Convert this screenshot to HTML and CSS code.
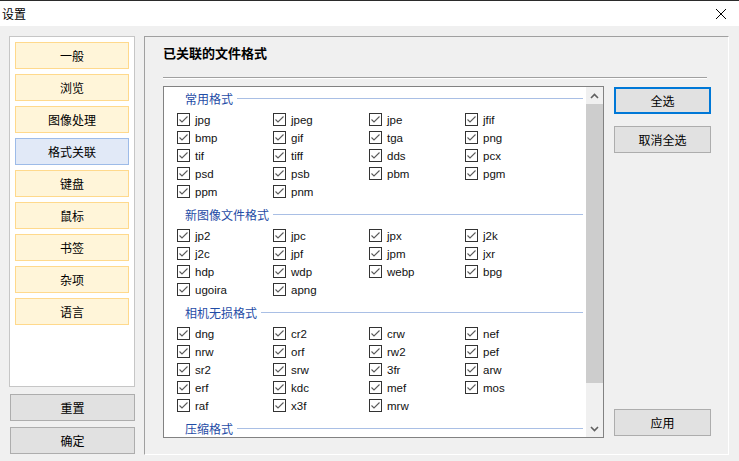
FILE: index.html
```html
<!DOCTYPE html>
<html lang="zh-CN">
<head>
<meta charset="utf-8">
<title>设置</title>
<link rel="stylesheet" href="styles.css">
</head>
<body>
<div class="titlebar">
  <span class="title">设置</span>
  <svg class="close" width="12" height="12" viewBox="0 0 12 12"><path d="M1 1 L11 11 M11 1 L1 11" stroke="#000" stroke-width="1" fill="none"/></svg>
</div>
<div class="main">
  <div class="side">
    <div class="nav">
      <div class="nav-btn">一般</div>
      <div class="nav-btn">浏览</div>
      <div class="nav-btn">图像处理</div>
      <div class="nav-btn active">格式关联</div>
      <div class="nav-btn">键盘</div>
      <div class="nav-btn">鼠标</div>
      <div class="nav-btn">书签</div>
      <div class="nav-btn">杂项</div>
      <div class="nav-btn">语言</div>
    </div>
    <div class="btn side-btn first">重置</div>
    <div class="btn side-btn">确定</div>
  </div>
  <div class="panel">
    <div class="header">已关联的文件格式</div>
    <div class="sep"></div>
    <div class="row">
      <div class="list">
        <div class="content">
          <div class="group-label"><span>常用格式</span><i class="gline"></i></div>
          <div class="grid">
            <label class="item"><span class="cb"><svg viewBox="0 0 11 11"><path d="M1.5 5.5 L4 8 L9.5 2.5"/></svg></span>jpg</label>
            <label class="item"><span class="cb"><svg viewBox="0 0 11 11"><path d="M1.5 5.5 L4 8 L9.5 2.5"/></svg></span>jpeg</label>
            <label class="item"><span class="cb"><svg viewBox="0 0 11 11"><path d="M1.5 5.5 L4 8 L9.5 2.5"/></svg></span>jpe</label>
            <label class="item"><span class="cb"><svg viewBox="0 0 11 11"><path d="M1.5 5.5 L4 8 L9.5 2.5"/></svg></span>jfif</label>
            <label class="item"><span class="cb"><svg viewBox="0 0 11 11"><path d="M1.5 5.5 L4 8 L9.5 2.5"/></svg></span>bmp</label>
            <label class="item"><span class="cb"><svg viewBox="0 0 11 11"><path d="M1.5 5.5 L4 8 L9.5 2.5"/></svg></span>gif</label>
            <label class="item"><span class="cb"><svg viewBox="0 0 11 11"><path d="M1.5 5.5 L4 8 L9.5 2.5"/></svg></span>tga</label>
            <label class="item"><span class="cb"><svg viewBox="0 0 11 11"><path d="M1.5 5.5 L4 8 L9.5 2.5"/></svg></span>png</label>
            <label class="item"><span class="cb"><svg viewBox="0 0 11 11"><path d="M1.5 5.5 L4 8 L9.5 2.5"/></svg></span>tif</label>
            <label class="item"><span class="cb"><svg viewBox="0 0 11 11"><path d="M1.5 5.5 L4 8 L9.5 2.5"/></svg></span>tiff</label>
            <label class="item"><span class="cb"><svg viewBox="0 0 11 11"><path d="M1.5 5.5 L4 8 L9.5 2.5"/></svg></span>dds</label>
            <label class="item"><span class="cb"><svg viewBox="0 0 11 11"><path d="M1.5 5.5 L4 8 L9.5 2.5"/></svg></span>pcx</label>
            <label class="item"><span class="cb"><svg viewBox="0 0 11 11"><path d="M1.5 5.5 L4 8 L9.5 2.5"/></svg></span>psd</label>
            <label class="item"><span class="cb"><svg viewBox="0 0 11 11"><path d="M1.5 5.5 L4 8 L9.5 2.5"/></svg></span>psb</label>
            <label class="item"><span class="cb"><svg viewBox="0 0 11 11"><path d="M1.5 5.5 L4 8 L9.5 2.5"/></svg></span>pbm</label>
            <label class="item"><span class="cb"><svg viewBox="0 0 11 11"><path d="M1.5 5.5 L4 8 L9.5 2.5"/></svg></span>pgm</label>
            <label class="item"><span class="cb"><svg viewBox="0 0 11 11"><path d="M1.5 5.5 L4 8 L9.5 2.5"/></svg></span>ppm</label>
            <label class="item"><span class="cb"><svg viewBox="0 0 11 11"><path d="M1.5 5.5 L4 8 L9.5 2.5"/></svg></span>pnm</label>
          </div>
          <div class="group-label"><span>新图像文件格式</span><i class="gline"></i></div>
          <div class="grid">
            <label class="item"><span class="cb"><svg viewBox="0 0 11 11"><path d="M1.5 5.5 L4 8 L9.5 2.5"/></svg></span>jp2</label>
            <label class="item"><span class="cb"><svg viewBox="0 0 11 11"><path d="M1.5 5.5 L4 8 L9.5 2.5"/></svg></span>jpc</label>
            <label class="item"><span class="cb"><svg viewBox="0 0 11 11"><path d="M1.5 5.5 L4 8 L9.5 2.5"/></svg></span>jpx</label>
            <label class="item"><span class="cb"><svg viewBox="0 0 11 11"><path d="M1.5 5.5 L4 8 L9.5 2.5"/></svg></span>j2k</label>
            <label class="item"><span class="cb"><svg viewBox="0 0 11 11"><path d="M1.5 5.5 L4 8 L9.5 2.5"/></svg></span>j2c</label>
            <label class="item"><span class="cb"><svg viewBox="0 0 11 11"><path d="M1.5 5.5 L4 8 L9.5 2.5"/></svg></span>jpf</label>
            <label class="item"><span class="cb"><svg viewBox="0 0 11 11"><path d="M1.5 5.5 L4 8 L9.5 2.5"/></svg></span>jpm</label>
            <label class="item"><span class="cb"><svg viewBox="0 0 11 11"><path d="M1.5 5.5 L4 8 L9.5 2.5"/></svg></span>jxr</label>
            <label class="item"><span class="cb"><svg viewBox="0 0 11 11"><path d="M1.5 5.5 L4 8 L9.5 2.5"/></svg></span>hdp</label>
            <label class="item"><span class="cb"><svg viewBox="0 0 11 11"><path d="M1.5 5.5 L4 8 L9.5 2.5"/></svg></span>wdp</label>
            <label class="item"><span class="cb"><svg viewBox="0 0 11 11"><path d="M1.5 5.5 L4 8 L9.5 2.5"/></svg></span>webp</label>
            <label class="item"><span class="cb"><svg viewBox="0 0 11 11"><path d="M1.5 5.5 L4 8 L9.5 2.5"/></svg></span>bpg</label>
            <label class="item"><span class="cb"><svg viewBox="0 0 11 11"><path d="M1.5 5.5 L4 8 L9.5 2.5"/></svg></span>ugoira</label>
            <label class="item"><span class="cb"><svg viewBox="0 0 11 11"><path d="M1.5 5.5 L4 8 L9.5 2.5"/></svg></span>apng</label>
          </div>
          <div class="group-label"><span>相机无损格式</span><i class="gline"></i></div>
          <div class="grid">
            <label class="item"><span class="cb"><svg viewBox="0 0 11 11"><path d="M1.5 5.5 L4 8 L9.5 2.5"/></svg></span>dng</label>
            <label class="item"><span class="cb"><svg viewBox="0 0 11 11"><path d="M1.5 5.5 L4 8 L9.5 2.5"/></svg></span>cr2</label>
            <label class="item"><span class="cb"><svg viewBox="0 0 11 11"><path d="M1.5 5.5 L4 8 L9.5 2.5"/></svg></span>crw</label>
            <label class="item"><span class="cb"><svg viewBox="0 0 11 11"><path d="M1.5 5.5 L4 8 L9.5 2.5"/></svg></span>nef</label>
            <label class="item"><span class="cb"><svg viewBox="0 0 11 11"><path d="M1.5 5.5 L4 8 L9.5 2.5"/></svg></span>nrw</label>
            <label class="item"><span class="cb"><svg viewBox="0 0 11 11"><path d="M1.5 5.5 L4 8 L9.5 2.5"/></svg></span>orf</label>
            <label class="item"><span class="cb"><svg viewBox="0 0 11 11"><path d="M1.5 5.5 L4 8 L9.5 2.5"/></svg></span>rw2</label>
            <label class="item"><span class="cb"><svg viewBox="0 0 11 11"><path d="M1.5 5.5 L4 8 L9.5 2.5"/></svg></span>pef</label>
            <label class="item"><span class="cb"><svg viewBox="0 0 11 11"><path d="M1.5 5.5 L4 8 L9.5 2.5"/></svg></span>sr2</label>
            <label class="item"><span class="cb"><svg viewBox="0 0 11 11"><path d="M1.5 5.5 L4 8 L9.5 2.5"/></svg></span>srw</label>
            <label class="item"><span class="cb"><svg viewBox="0 0 11 11"><path d="M1.5 5.5 L4 8 L9.5 2.5"/></svg></span>3fr</label>
            <label class="item"><span class="cb"><svg viewBox="0 0 11 11"><path d="M1.5 5.5 L4 8 L9.5 2.5"/></svg></span>arw</label>
            <label class="item"><span class="cb"><svg viewBox="0 0 11 11"><path d="M1.5 5.5 L4 8 L9.5 2.5"/></svg></span>erf</label>
            <label class="item"><span class="cb"><svg viewBox="0 0 11 11"><path d="M1.5 5.5 L4 8 L9.5 2.5"/></svg></span>kdc</label>
            <label class="item"><span class="cb"><svg viewBox="0 0 11 11"><path d="M1.5 5.5 L4 8 L9.5 2.5"/></svg></span>mef</label>
            <label class="item"><span class="cb"><svg viewBox="0 0 11 11"><path d="M1.5 5.5 L4 8 L9.5 2.5"/></svg></span>mos</label>
            <label class="item"><span class="cb"><svg viewBox="0 0 11 11"><path d="M1.5 5.5 L4 8 L9.5 2.5"/></svg></span>raf</label>
            <label class="item"><span class="cb"><svg viewBox="0 0 11 11"><path d="M1.5 5.5 L4 8 L9.5 2.5"/></svg></span>x3f</label>
            <label class="item"><span class="cb"><svg viewBox="0 0 11 11"><path d="M1.5 5.5 L4 8 L9.5 2.5"/></svg></span>mrw</label>
          </div>
          <div class="group-label"><span>压缩格式</span><i class="gline"></i></div>
        </div>
        <div class="scrollbar">
          <div class="arrow"><svg width="9" height="6" viewBox="0 0 9 6"><path d="M1 5 L4.5 1.5 L8 5" stroke="#606060" stroke-width="1.6" fill="none"/></svg></div>
          <div class="thumb"></div>
          <div class="track"></div>
          <div class="arrow"><svg width="9" height="6" viewBox="0 0 9 6"><path d="M1 1 L4.5 4.5 L8 1" stroke="#606060" stroke-width="1.6" fill="none"/></svg></div>
        </div>
      </div>
      <div class="actions">
        <div class="btn focus">全选</div>
        <div class="btn second">取消全选</div>
        <div class="btn apply">应用</div>
      </div>
    </div>
  </div>
</div>
</body>
</html>
```
FILE: styles.css
```css
* { box-sizing: border-box; }
body {
  margin: 0;
  width: 739px;
  height: 461px;
  overflow: hidden;
  background: #f0f0f0;
  color: #000;
  font-family: "Liberation Sans", "Noto Sans CJK SC", sans-serif;
  font-size: 12px;
}
.titlebar {
  height: 26px;
  background: #fff;
  border-top: 1px solid #2b2b2b;
  display: flex;
  align-items: center;
  justify-content: space-between;
  padding: 0 12px 0 2px;
}
.title {
  font-family: "Noto Sans CJK SC", sans-serif;
  font-size: 12px;
}
.close { display: block; }
.main {
  display: flex;
  gap: 9px;
  padding: 10px 0 0 9px;
}
.side {
  width: 126px;
  display: flex;
  flex-direction: column;
}
.nav {
  height: 351px;
  background: #fff;
  border: 1px solid #c6c6c6;
  padding: 5px;
  display: flex;
  flex-direction: column;
  gap: 5px;
}
.nav-btn {
  height: 27px;
  border: 1px solid #ffd98c;
  background: #fff5d9;
  display: flex;
  align-items: center;
  justify-content: center;
  font-family: "Noto Sans CJK SC", sans-serif;
  font-size: 12px;
}
.nav-btn.active {
  background: #e1e9f7;
  border-color: #9dbbe8;
}
.btn {
  height: 27px;
  border: 1px solid #adadad;
  background: #e1e1e1;
  display: flex;
  align-items: center;
  justify-content: center;
  font-family: "Noto Sans CJK SC", sans-serif;
  font-size: 12px;
}
.side-btn {
  width: 125px;
  margin-left: 1px;
  margin-top: 6px;
}
.side-btn.first { margin-top: 7px; }
.panel {
  width: 585px;
  height: 419px;
  border-left: 1px solid #a0a0a0;
  border-top: 1px solid #a0a0a0;
  border-right: 1px solid #fff;
  border-bottom: 1px solid #fff;
  padding: 7px 0 0 18px;
}
.header {
  height: 18px;
  line-height: 18px;
  font-family: "Noto Sans CJK SC", sans-serif;
  font-size: 13px;
  font-weight: bold;
}
.sep {
  width: 544px;
  height: 2px;
  margin-top: 15px;
  border-top: 1px solid #a0a0a0;
  border-bottom: 1px solid #fff;
}
.row {
  display: flex;
  margin-top: 7px;
}
.list {
  width: 441px;
  height: 352px;
  border: 1px solid #828282;
  background: #fff;
  display: flex;
}
.content {
  flex: 1;
  overflow: hidden;
  padding-top: 2px;
}
.group-label {
  height: 18px;
  display: flex;
  align-items: center;
  padding-left: 21px;
  padding-right: 3px;
  color: #1f4ca6;
  font-family: "Noto Sans CJK SC", sans-serif;
  font-size: 12px;
}
.gline {
  flex: 1;
  height: 1px;
  margin-left: 4px;
  background: #a9bfe5;
}
.grid {
  display: grid;
  grid-template-columns: repeat(4, 96px);
  grid-auto-rows: 18px;
  padding-left: 13px;
  margin: 4px 0;
}
.item {
  display: flex;
  align-items: center;
  gap: 5px;
  font-size: 11.5px;
  color: #111;
}
.cb {
  width: 13px;
  height: 13px;
  border: 1px solid #333;
  background: #fff;
  display: block;
  margin-top: -1px;
}
.cb svg {
  display: block;
  width: 11px;
  height: 11px;
}
.cb path {
  fill: none;
  stroke: #5a5a5a;
  stroke-width: 1.1;
}
.scrollbar {
  width: 17px;
  background: #f0f0f0;
  display: flex;
  flex-direction: column;
}
.arrow {
  height: 17px;
  display: flex;
  align-items: center;
  justify-content: center;
}
.arrow svg { display: block; }
.thumb {
  height: 279px;
  background: #cdcdcd;
}
.track { flex: 1; }
.actions {
  width: 97px;
  margin-left: 10px;
  display: flex;
  flex-direction: column;
}
.actions .btn.focus {
  margin-top: 1px;
  border: 2px solid #0078d7;
}
.actions .btn.second { margin-top: 12px; }
.actions .btn.apply {
  margin-top: auto;
  margin-bottom: 2px;
}
```
